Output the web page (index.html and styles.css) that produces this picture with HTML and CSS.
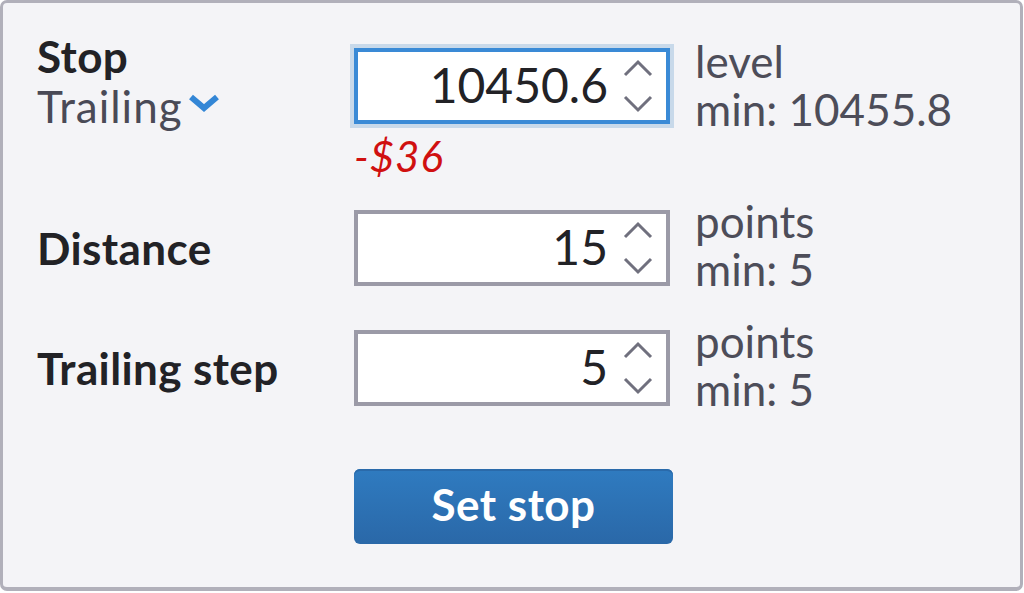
FILE: index.html
```html
<!DOCTYPE html>
<html lang="en">
<head>
    <meta charset="UTF-8">
    <meta name="viewport" content="width=device-width, initial-scale=1.0">
    <title>Set stop</title>
    <link rel="stylesheet" href="styles.css">
</head>
<body>
    <div class="panel">
        <!-- Stop level -->
        <div class="row row-first">
            <div class="label-block">
                <div class="label">Stop</div>
                <div class="dropdown">Trailing
                    <svg class="caret" width="32" height="18" viewBox="0 0 32 18">
                        <path d="M3 3 L16 14 L29 3" fill="none" stroke="#3386d6" stroke-width="6"/>
                    </svg>
                </div>
            </div>
            <div class="field">
                <div class="spin focused">
                    <span class="value">10450.6</span>
                    <svg class="arrows" width="30" height="54" viewBox="0 0 30 54">
                        <path d="M2 16 L15 3 L28 16" fill="none" stroke="#70707e" stroke-width="3"/>
                        <path d="M2 38 L15 51 L28 38" fill="none" stroke="#70707e" stroke-width="3"/>
                    </svg>
                </div>
                <div class="loss">-$36</div>
            </div>
            <div class="info info-first">level<br>min: 10455.8</div>
        </div>

        <!-- Distance -->
        <div class="row row-distance">
            <div class="label">Distance</div>
            <div class="spin">
                <span class="value">15</span>
                <svg class="arrows" width="30" height="54" viewBox="0 0 30 54">
                    <path d="M2 16 L15 3 L28 16" fill="none" stroke="#70707e" stroke-width="3"/>
                    <path d="M2 38 L15 51 L28 38" fill="none" stroke="#70707e" stroke-width="3"/>
                </svg>
            </div>
            <div class="info">points<br>min: 5</div>
        </div>

        <!-- Trailing step -->
        <div class="row row-step">
            <div class="label">Trailing step</div>
            <div class="spin">
                <span class="value">5</span>
                <svg class="arrows" width="30" height="54" viewBox="0 0 30 54">
                    <path d="M2 16 L15 3 L28 16" fill="none" stroke="#70707e" stroke-width="3"/>
                    <path d="M2 38 L15 51 L28 38" fill="none" stroke="#70707e" stroke-width="3"/>
                </svg>
            </div>
            <div class="info">points<br>min: 5</div>
        </div>

        <div class="actions">
            <button class="button">Set stop</button>
        </div>
    </div>
</body>
</html>
```

FILE: styles.css
```css
body {
    margin: 0;
    background: #ffffff;
    font-family: Lato, "Open Sans", sans-serif;
}
.panel {
    box-sizing: border-box;
    width: 1023px;
    height: 591px;
    background: #f4f4f7;
    border: 3px solid #b1b0ba;
    border-bottom-width: 4px;
    border-radius: 7px;
    padding: 28px 0 0 34px;
}
.row {
    display: grid;
    grid-template-columns: 292px 316px auto;
    grid-auto-rows: 76px;
    column-gap: 25px;
    align-items: center;
}
.row-first {
    grid-auto-rows: auto;
    align-items: start;
}
.row-distance {
    margin-top: 34px;
}
.row-step {
    margin-top: 44px;
}
.label {
    font-size: 44px;
    line-height: 50px;
    font-weight: 700;
    letter-spacing: 0.4px;
    color: #222226;
}
.dropdown {
    font-size: 44px;
    line-height: 50px;
    letter-spacing: 1px;
    color: #4a4a56;
    display: flex;
    align-items: center;
}
.caret {
    margin: -6px 0 0 5px;
}
.field {
    margin-top: 17px;
}
.spin {
    box-sizing: border-box;
    width: 316px;
    height: 76px;
    background: #ffffff;
    border: 4px solid #9b9aa7;
    display: flex;
    align-items: center;
    justify-content: flex-end;
    padding-right: 13px;
}
.spin.focused {
    border-color: #3a8ad6;
    box-shadow: 0 0 0 4px #c8d9ea;
}
.value {
    font-size: 48px;
    line-height: 56px;
    color: #222226;
    margin-right: 15px;
    margin-top: -2px;
}
.arrows {
    display: block;
}
.loss {
    margin-top: 12px;
    font-size: 42px;
    line-height: 40px;
    font-style: italic;
    letter-spacing: 1px;
    color: #d01010;
}
.info {
    font-size: 44px;
    line-height: 48px;
    color: #4d4d59;
    margin-bottom: 6px;
}
.info-first {
    margin: 6px 0 0;
}
.actions {
    margin: 63px 0 0 317px;
}
.button {
    width: 319px;
    height: 75px;
    border: none;
    border-radius: 6px;
    background: linear-gradient(#2f7bc0, #2a68a8);
    box-shadow: inset 0 2px 0 #2a6aaa;
    color: #ffffff;
    font-family: Lato, "Open Sans", sans-serif;
    font-size: 44px;
    font-weight: 700;
    letter-spacing: 0.5px;
    padding: 0 0 6px;
    cursor: pointer;
}
```
